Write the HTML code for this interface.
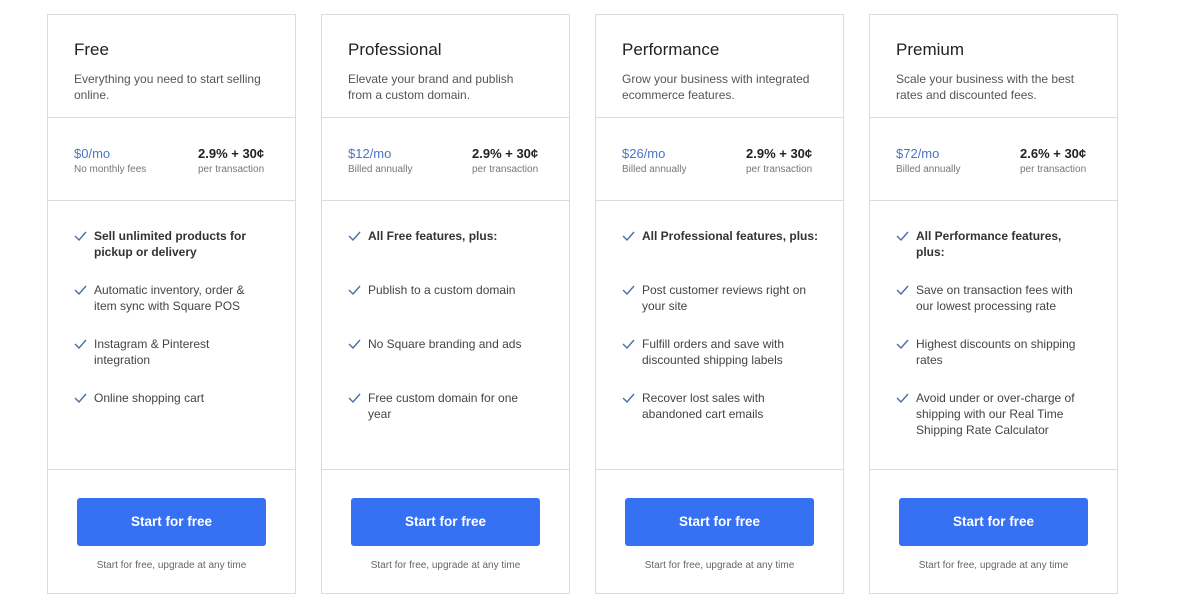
<!DOCTYPE html>
<html><head><style>
*{margin:0;padding:0;box-sizing:border-box}
body{width:1200px;height:616px;background:#fff;font-family:"Liberation Sans",sans-serif;color:#3a3a3a;position:relative;overflow:hidden}
.card{position:absolute;top:14px;width:249px;height:580px;border:1px solid #dcdcdc}
.sec{position:absolute;left:0;right:0;border-top:1px solid #dcdcdc}
h2{position:absolute;left:26px;top:25px;font-size:17px;font-weight:normal;color:#222}
.desc{position:absolute;left:26px;top:56px;font-size:12px;line-height:16px;color:#555;width:215px}
.price{position:absolute;left:26px;top:131px;font-size:13px;color:#4a74c8}
.rate{position:absolute;left:150px;top:131px;font-size:13px;color:#222;font-weight:bold}
.sub{display:block;font-size:10px;color:#777;margin-top:3px;font-weight:normal}
ul{position:absolute;left:26px;top:213px;list-style:none;width:215px}
li{position:relative;padding-left:20px;font-size:12px;line-height:16px;color:#444;height:54px}
li svg{position:absolute;left:0;top:3px}
li.b{font-weight:bold;color:#333}
.btn{position:absolute;left:29px;top:483px;width:189px;height:48px;background:#3670f3;border-radius:3px;color:#fff;font-weight:bold;font-size:13.5px;text-align:center;line-height:48px}
.foot{position:absolute;left:0;right:0;top:545px;text-align:center;font-size:10px;color:#666}
</style></head><body>

<div class="card" style="left:47px">
<h2>Free</h2><div class="desc">Everything you need to start selling<br>online.</div>
<div class="sec" style="top:102px"></div>
<div class="price">$0/mo<span class="sub">No monthly fees</span></div>
<div class="rate">2.9% + 30¢<span class="sub">per transaction</span></div>
<div class="sec" style="top:185px"></div>
<ul>
<li class="b"><svg width="13" height="10"><path d="M1 5l4 4 7-8" stroke="#4a6fa5" stroke-width="1.4" fill="none"/></svg>Sell unlimited products for<br>pickup or delivery</li>
<li><svg width="13" height="10"><path d="M1 5l4 4 7-8" stroke="#4a6fa5" stroke-width="1.4" fill="none"/></svg>Automatic inventory, order &amp;<br>item sync with Square POS</li>
<li><svg width="13" height="10"><path d="M1 5l4 4 7-8" stroke="#4a6fa5" stroke-width="1.4" fill="none"/></svg>Instagram &amp; Pinterest<br>integration</li>
<li><svg width="13" height="10"><path d="M1 5l4 4 7-8" stroke="#4a6fa5" stroke-width="1.4" fill="none"/></svg>Online shopping cart</li>
</ul>
<div class="sec" style="top:454px"></div>
<div class="btn">Start for free</div><div class="foot">Start for free, upgrade at any time</div>
</div>

<div class="card" style="left:321px">
<h2>Professional</h2><div class="desc">Elevate your brand and publish<br>from a custom domain.</div>
<div class="sec" style="top:102px"></div>
<div class="price">$12/mo<span class="sub">Billed annually</span></div>
<div class="rate">2.9% + 30¢<span class="sub">per transaction</span></div>
<div class="sec" style="top:185px"></div>
<ul>
<li class="b"><svg width="13" height="10"><path d="M1 5l4 4 7-8" stroke="#4a6fa5" stroke-width="1.4" fill="none"/></svg>All Free features, plus:</li>
<li><svg width="13" height="10"><path d="M1 5l4 4 7-8" stroke="#4a6fa5" stroke-width="1.4" fill="none"/></svg>Publish to a custom domain</li>
<li><svg width="13" height="10"><path d="M1 5l4 4 7-8" stroke="#4a6fa5" stroke-width="1.4" fill="none"/></svg>No Square branding and ads</li>
<li><svg width="13" height="10"><path d="M1 5l4 4 7-8" stroke="#4a6fa5" stroke-width="1.4" fill="none"/></svg>Free custom domain for one<br>year</li>
</ul>
<div class="sec" style="top:454px"></div>
<div class="btn">Start for free</div><div class="foot">Start for free, upgrade at any time</div>
</div>

<div class="card" style="left:595px">
<h2>Performance</h2><div class="desc">Grow your business with integrated<br>ecommerce features.</div>
<div class="sec" style="top:102px"></div>
<div class="price">$26/mo<span class="sub">Billed annually</span></div>
<div class="rate">2.9% + 30¢<span class="sub">per transaction</span></div>
<div class="sec" style="top:185px"></div>
<ul>
<li class="b"><svg width="13" height="10"><path d="M1 5l4 4 7-8" stroke="#4a6fa5" stroke-width="1.4" fill="none"/></svg>All Professional features, plus:</li>
<li><svg width="13" height="10"><path d="M1 5l4 4 7-8" stroke="#4a6fa5" stroke-width="1.4" fill="none"/></svg>Post customer reviews right on<br>your site</li>
<li><svg width="13" height="10"><path d="M1 5l4 4 7-8" stroke="#4a6fa5" stroke-width="1.4" fill="none"/></svg>Fulfill orders and save with<br>discounted shipping labels</li>
<li><svg width="13" height="10"><path d="M1 5l4 4 7-8" stroke="#4a6fa5" stroke-width="1.4" fill="none"/></svg>Recover lost sales with<br>abandoned cart emails</li>
</ul>
<div class="sec" style="top:454px"></div>
<div class="btn">Start for free</div><div class="foot">Start for free, upgrade at any time</div>
</div>

<div class="card" style="left:869px">
<h2>Premium</h2><div class="desc">Scale your business with the best<br>rates and discounted fees.</div>
<div class="sec" style="top:102px"></div>
<div class="price">$72/mo<span class="sub">Billed annually</span></div>
<div class="rate">2.6% + 30¢<span class="sub">per transaction</span></div>
<div class="sec" style="top:185px"></div>
<ul>
<li class="b"><svg width="13" height="10"><path d="M1 5l4 4 7-8" stroke="#4a6fa5" stroke-width="1.4" fill="none"/></svg>All Performance features,<br>plus:</li>
<li><svg width="13" height="10"><path d="M1 5l4 4 7-8" stroke="#4a6fa5" stroke-width="1.4" fill="none"/></svg>Save on transaction fees with<br>our lowest processing rate</li>
<li><svg width="13" height="10"><path d="M1 5l4 4 7-8" stroke="#4a6fa5" stroke-width="1.4" fill="none"/></svg>Highest discounts on shipping<br>rates</li>
<li><svg width="13" height="10"><path d="M1 5l4 4 7-8" stroke="#4a6fa5" stroke-width="1.4" fill="none"/></svg>Avoid under or over-charge of<br>shipping with our Real Time<br>Shipping Rate Calculator</li>
</ul>
<div class="sec" style="top:454px"></div>
<div class="btn">Start for free</div><div class="foot">Start for free, upgrade at any time</div>
</div>

</body></html>
